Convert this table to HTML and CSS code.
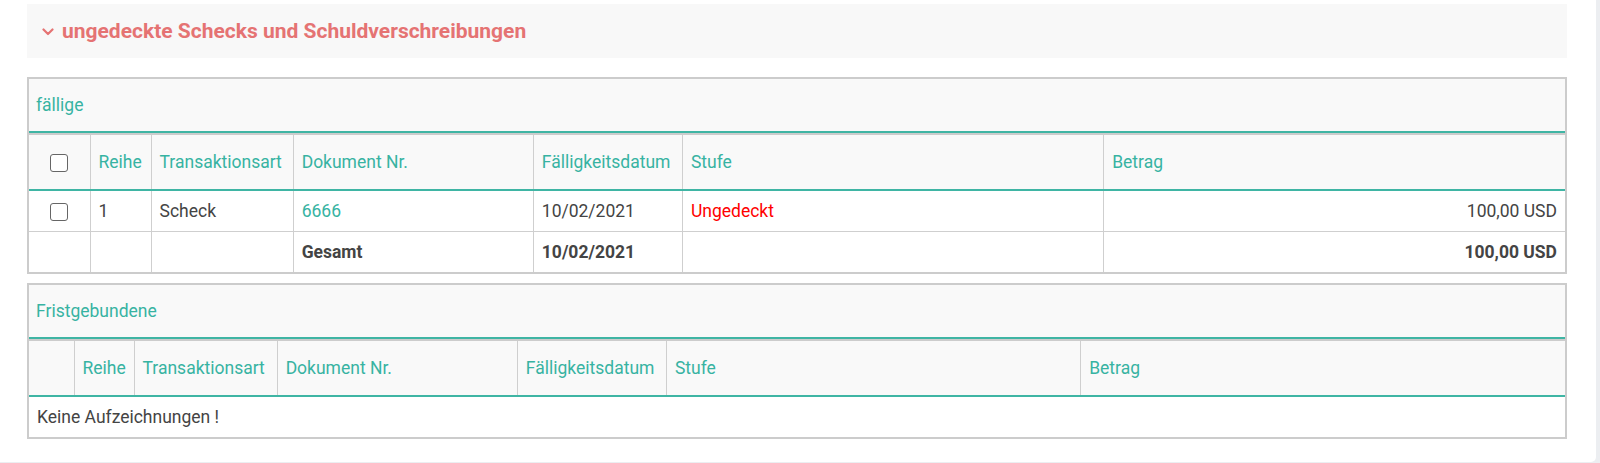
FILE: index.html
```html
<!DOCTYPE html>
<html lang="de">
<head>
<meta charset="utf-8">
<title>ungedeckte Schecks und Schuldverschreibungen</title>
<link rel="stylesheet" href="styles.css">
</head>
<body>
<div class="card">
  <div class="section-head">
    <svg class="chev" width="12" height="8" viewBox="0 0 12 8"><path d="M1.5 1.5 L6 6 L10.5 1.5" fill="none" stroke="currentColor" stroke-width="2.2" stroke-linecap="round" stroke-linejoin="round"/></svg>
    <span class="section-title">ungedeckte Schecks und Schuldverschreibungen</span>
  </div>

  <div class="panel panel-due">
    <div class="panel-caption">fällige</div>
    <table class="grid grid-due">
      <colgroup>
        <col class="w-sel"><col class="w-row"><col class="w-type"><col class="w-doc"><col class="w-date"><col class="w-level"><col class="w-amount">
      </colgroup>
      <thead>
        <tr>
          <th class="center"><span class="cb"></span></th>
          <th>Reihe</th>
          <th>Transaktionsart</th>
          <th>Dokument Nr.</th>
          <th>Fälligkeitsdatum</th>
          <th>Stufe</th>
          <th>Betrag</th>
        </tr>
      </thead>
      <tbody>
        <tr>
          <td class="center"><span class="cb"></span></td>
          <td>1</td>
          <td>Scheck</td>
          <td class="link">6666</td>
          <td>10/02/2021</td>
          <td class="bad">Ungedeckt</td>
          <td class="num">100,00 USD</td>
        </tr>
        <tr class="total">
          <td></td>
          <td></td>
          <td></td>
          <td>Gesamt</td>
          <td>10/02/2021</td>
          <td></td>
          <td class="num">100,00 USD</td>
        </tr>
      </tbody>
    </table>
  </div>

  <div class="panel panel-term">
    <div class="panel-caption">Fristgebundene</div>
    <table class="grid grid-term">
      <colgroup>
        <col class="w-sel"><col class="w-row"><col class="w-type"><col class="w-doc"><col class="w-date"><col class="w-level"><col class="w-amount">
      </colgroup>
      <thead>
        <tr>
          <th></th>
          <th>Reihe</th>
          <th>Transaktionsart</th>
          <th>Dokument Nr.</th>
          <th>Fälligkeitsdatum</th>
          <th>Stufe</th>
          <th>Betrag</th>
        </tr>
      </thead>
      <tbody>
        <tr>
          <td colspan="7">Keine Aufzeichnungen !</td>
        </tr>
      </tbody>
    </table>
  </div>
</div>
</body>
</html>
```

FILE: styles.css
```css
html, body {
  margin: 0;
  padding: 0;
}
body {
  background: #eceef1;
  font-family: Roboto, "Liberation Sans", sans-serif;
  color: #444;
  height: 463px;
  overflow: hidden;
}
.card {
  width: 1596px;
  box-sizing: border-box;
  background: #fff;
  padding: 4px 29px 23px 27px;
  border-bottom-right-radius: 5px;
}
.section-head {
  height: 54px;
  background: #f8f8f8;
  display: flex;
  align-items: center;
  padding-left: 15px;
  gap: 8px;
  color: #e57373;
}
.chev {
  display: block;
  margin-top: 2px;
}
.section-title {
  font-size: 21px;
  font-weight: 700;
}
.panel {
  border: 2px solid #cccccc;
  margin-top: 19px;
}
.panel-term {
  margin-top: 9px;
}
.panel-caption {
  height: 52px;
  background: #f9f9f9;
  color: #37b3a2;
  font-size: 17.5px;
  display: flex;
  align-items: center;
  padding-left: 7px;
  border-bottom: 2px solid #3fb5a4;
}
.grid {
  width: 100%;
  table-layout: fixed;
  border-collapse: collapse;
  border-top: 2px solid #cccccc;
  font-size: 17.5px;
}
.grid th, .grid td {
  padding: 0 8px;
  text-align: left;
  border-left: 1px solid #cfcfcf;
  white-space: nowrap;
}
.grid th:first-child, .grid td:first-child {
  border-left: none;
}
.grid th {
  height: 54px;
  background: #f9f9f9;
  color: #37b3a2;
  font-weight: 400;
  border-bottom: 2px solid #3fb5a4;
}
.grid td {
  height: 40px;
  border-bottom: 1px solid #cfcfcf;
}
.grid tbody tr:last-child td {
  border-bottom: none;
}
.grid .center {
  text-align: center;
}
.grid .num {
  text-align: right;
}
.grid .link {
  color: #37b3a2;
}
.grid .bad {
  color: #ff0000;
}
.total td {
  font-weight: 700;
}
.cb {
  display: inline-block;
  width: 16px;
  height: 16px;
  border: 1.5px solid #666;
  border-radius: 3px;
  background: #fff;
  vertical-align: middle;
}
.grid-due .w-sel { width: 61px; }
.grid-due .w-row { width: 61px; }
.grid-due .w-type { width: 142px; }
.grid-due .w-doc { width: 240px; }
.grid-due .w-date { width: 149px; }
.grid-due .w-level { width: 421px; }
.grid-due .w-amount { width: 461px; }
.grid-term .w-sel { width: 45px; }
.grid-term .w-row { width: 60px; }
.grid-term .w-type { width: 143px; }
.grid-term .w-doc { width: 240px; }
.grid-term .w-date { width: 149px; }
.grid-term .w-level { width: 414px; }
.grid-term .w-amount { width: 484px; }
```
